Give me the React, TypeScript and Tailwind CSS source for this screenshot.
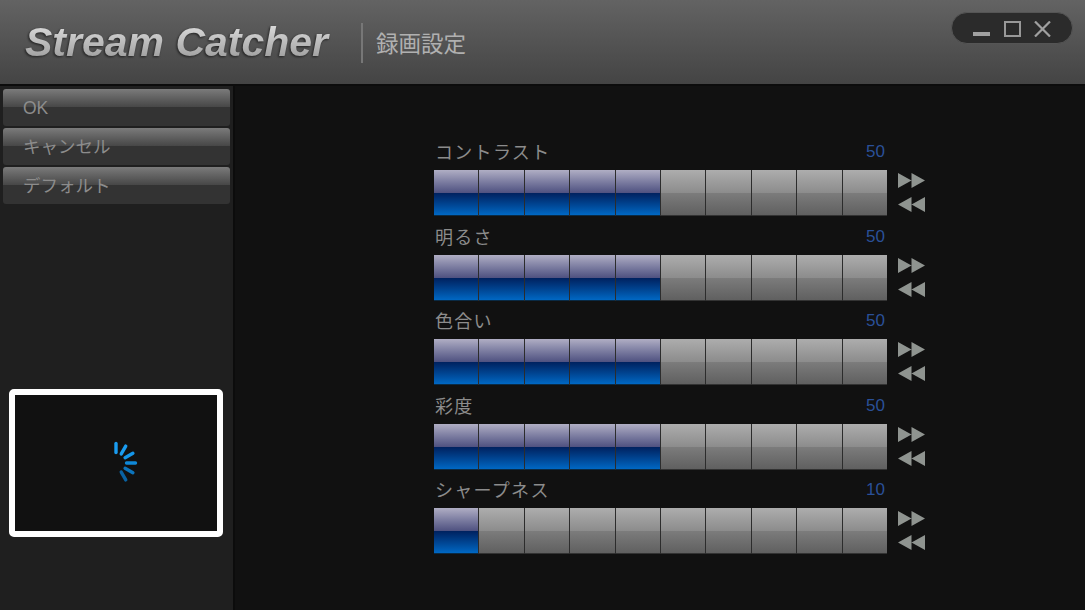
const jp = "font-['Liberation_Sans','Noto_Sans_CJK_JP',sans-serif]";

const sliders = [
  { label: 'コントラスト', value: 50 },
  { label: '明るさ', value: 50 },
  { label: '色合い', value: 50 },
  { label: '彩度', value: 50 },
  { label: 'シャープネス', value: 10 },
];

function Slider({ label, value }: { label: string; value: number }) {
  const cells = Array.from({ length: 10 }, (_, i) => i < value / 10);
  return (
    <div className="h-[84.5px] w-[492px]">
      <div className="flex h-[36px] w-[453px] items-center justify-between pl-[1px] pr-[2px]">
        <span className="mt-[3px] text-[18px] tracking-[1.3px] text-[#8c8c8c]">{label}</span>
        <span className="text-[17px] text-[#2a5098]">{value}</span>
      </div>
      <div className="flex">
        <div className="grid h-[46px] w-[453px] grid-cols-10 gap-x-px bg-[#2c2c2c]">
          {cells.map((on, i) => (
            <div key={i} className={'flex flex-col border-b ' + (on ? 'border-b-[#0a2a44] bg-[#141414]' : 'border-b-[#333333]')}>
              <div
                className={
                  'h-[23px] bg-gradient-to-b ' +
                  (on ? 'from-[#b0aec4] to-[#4f5180]' : 'from-[#adadad] to-[#8c8c8c]')
                }
              />
              <div
                className={
                  'flex-1 bg-gradient-to-b ' +
                  (on ? 'from-[#00215f] to-[#0068c4]' : 'from-[#7c7c7c] to-[#606060]')
                }
              />
            </div>
          ))}
        </div>
        <div className="ml-[11px] flex flex-col gap-[9px] pt-[3px]">
          <svg width="27" height="15" viewBox="0 0 27 15" className="block">
            <path d="M0 0 L13.5 7.5 L0 15 Z M13.5 0 L27 7.5 L13.5 15 Z" fill="#8f9490" />
          </svg>
          <svg width="27" height="15" viewBox="0 0 27 15" className="block">
            <path d="M27 0 L13.5 7.5 L27 15 Z M13.5 0 L0 7.5 L13.5 15 Z" fill="#8f9490" />
          </svg>
        </div>
      </div>
    </div>
  );
}

function SideButton({ label }: { label: string }) {
  return (
    <button className="flex h-[37px] w-[227px] flex-col overflow-hidden rounded-[3px] text-left">
      <span className="h-[18px] w-full bg-gradient-to-b from-[#7b7b7b] to-[#474747]" />
      <span className="h-[19px] w-full bg-[#333333]" />
      <span className="-mt-[30px] pl-[20px] text-[17.5px] leading-[24px] text-[#8c8c8c]">{label}</span>
    </button>
  );
}

function Spinner() {
  const bars = [
    { a: 0, c: '#1a9cf0' },
    { a: 30, c: '#1a9cf0' },
    { a: 60, c: '#1496ea' },
    { a: 90, c: '#0f88d8' },
    { a: 120, c: '#0c74bc' },
    { a: 150, c: '#0a62a2' },
  ];
  return (
    <svg width="48" height="48" viewBox="-24 -24 48 48">
      {bars.map((b) => (
        <line
          key={b.a}
          x1="0"
          y1="-19.5"
          x2="0"
          y2="-10.5"
          stroke={b.c}
          strokeWidth="3.4"
          strokeLinecap="round"
          transform={`rotate(${b.a})`}
        />
      ))}
    </svg>
  );
}

function WindowControls() {
  return (
    <div className="mr-[12px] mt-[12px] flex h-[32px] w-[122px] items-center rounded-full border border-[#555555] bg-[#2b2b2b] pl-[21px]">
      <svg width="17" height="16" viewBox="0 0 17 16" className="mt-[2px]">
        <rect x="0" y="11" width="17" height="4" fill="#a0a0a0" />
      </svg>
      <svg width="17" height="16" viewBox="0 0 17 16" className="ml-[14px] mt-[2px]">
        <rect x="1" y="1" width="15" height="14" fill="none" stroke="#999999" strokeWidth="2" />
      </svg>
      <svg width="17" height="16" viewBox="0 0 17 16" className="ml-[13px] mt-[2px]">
        <path d="M1 0.5 L16 15.5 M16 0.5 L1 15.5" stroke="#a0a0a0" strokeWidth="2.2" />
      </svg>
    </div>
  );
}

export default function App() {
  return (
    <div className={`flex h-[610px] w-[1085px] flex-col overflow-hidden bg-[#111111] ${jp}`}>
      <header className="flex h-[86px] shrink-0 items-start justify-between border-b-2 border-b-[#0c0c0c] bg-gradient-to-b from-[#636363] to-[#444444]">
        <div className="flex items-start pl-[25px] pt-[23px]">
          <span className="-mt-[1px] w-[336px] bg-gradient-to-b from-[#e0e0e0] to-[#9a9a9a] bg-clip-text text-[41px] leading-[40px] font-bold italic text-transparent [filter:drop-shadow(-1px_1px_1px_#222)]">
            Stream Catcher
          </span>
          <span className="h-[40px] w-[2px] bg-[#777777]" />
          <span className="ml-[13px] mt-[2px] text-[22.5px] leading-[40px] text-[#b0b0b0]">録画設定</span>
        </div>
        <WindowControls />
      </header>
      <div className="flex flex-1">
        <aside className="flex w-[235px] shrink-0 flex-col border-r-2 border-r-[#0c0c0c] bg-[#1f1f1f] pl-[3px] pt-[3px]">
          <div className="flex flex-col gap-[2px]">
            <SideButton label="OK" />
            <SideButton label="キャンセル" />
            <SideButton label="デフォルト" />
          </div>
          <div className="ml-[6px] mt-[185px] flex h-[148px] w-[214px] items-center justify-center rounded-[5px] border-[6px] border-white bg-[#111111]">
            <Spinner />
          </div>
        </aside>
        <main className="flex-1 pl-[199px] pt-[48px]">
          {sliders.map((s) => (
            <Slider key={s.label} label={s.label} value={s.value} />
          ))}
        </main>
      </div>
    </div>
  );
}
